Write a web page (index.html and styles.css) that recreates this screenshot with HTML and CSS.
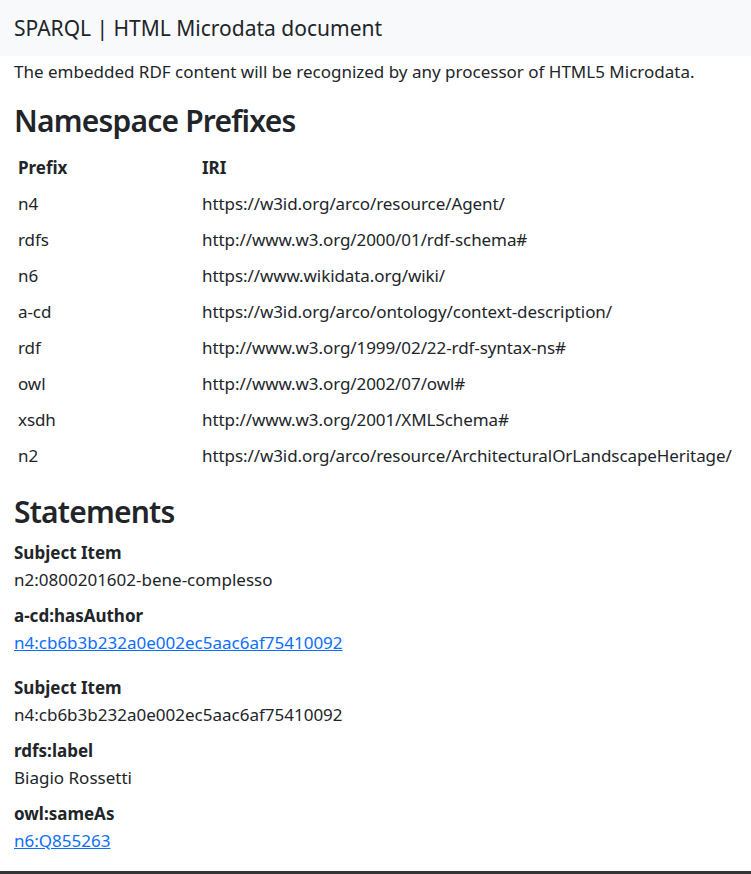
FILE: index.html
```html
<!DOCTYPE html>
<html lang="en">
<head>
<meta charset="utf-8">
<title>SPARQL | HTML Microdata document</title>
<link rel="stylesheet" href="styles.css">
</head>
<body>
<nav class="navbar"><span class="brand">SPARQL | HTML Microdata document</span></nav>
<main class="container">
  <p class="lead-text">The embedded RDF content will be recognized by any processor of HTML5 Microdata.</p>
  <h2 class="section-title">Namespace Prefixes</h2>
  <table class="prefix-table">
    <thead><tr><th class="col-prefix">Prefix</th><th>IRI</th></tr></thead>
    <tbody>
      <tr><td>n4</td><td>https://w3id.org/arco/resource/Agent/</td></tr>
      <tr><td>rdfs</td><td>http://www.w3.org/2000/01/rdf-schema#</td></tr>
      <tr><td>n6</td><td>https://www.wikidata.org/wiki/</td></tr>
      <tr><td>a-cd</td><td>https://w3id.org/arco/ontology/context-description/</td></tr>
      <tr><td>rdf</td><td>http://www.w3.org/1999/02/22-rdf-syntax-ns#</td></tr>
      <tr><td>owl</td><td>http://www.w3.org/2002/07/owl#</td></tr>
      <tr><td>xsdh</td><td>http://www.w3.org/2001/XMLSchema#</td></tr>
      <tr><td>n2</td><td>https://w3id.org/arco/resource/ArchitecturalOrLandscapeHeritage/</td></tr>
    </tbody>
  </table>
  <h2 class="section-title">Statements</h2>
  <div class="statements">
    <dl class="item">
      <dt>Subject Item</dt>
      <dd>n2:0800201602-bene-complesso</dd>
      <dt>a-cd:hasAuthor</dt>
      <dd><a href="#">n4:cb6b3b232a0e002ec5aac6af75410092</a></dd>
    </dl>
    <dl class="item">
      <dt>Subject Item</dt>
      <dd>n4:cb6b3b232a0e002ec5aac6af75410092</dd>
      <dt>rdfs:label</dt>
      <dd>Biagio Rossetti</dd>
      <dt>owl:sameAs</dt>
      <dd><a href="#">n6:Q855263</a></dd>
    </dl>
  </div>
</main>
<footer class="footer"></footer>
</body>
</html>
```
FILE: styles.css
```css
html, body {
  margin: 0;
  padding: 0;
}
body {
  font-family: "Noto Sans", "Open Sans", sans-serif;
  font-size: 17px;
  line-height: 24px;
  color: #212529;
  background: #fff;
}
.navbar {
  background: #f8f9fa;
  height: 56px;
  display: flex;
  align-items: center;
  padding: 0 14px;
}
.brand {
  font-size: 21px;
  line-height: 30px;
  color: #212529;
}
.container {
  padding: 4px 14px 0;
}
.lead-text {
  margin: 0 0 18px;
}
.section-title {
  font-size: 30px;
  font-weight: 600;
  letter-spacing: -0.8px;
  line-height: 38px;
  margin: 0 0 10px;
}
.prefix-table {
  width: 100%;
  border-collapse: collapse;
  margin-bottom: 19px;
}
.prefix-table th,
.prefix-table td {
  text-align: left;
  padding: 6px 4px;
  vertical-align: top;
}
.prefix-table td {
  letter-spacing: -0.08px;
}
.prefix-table th {
  font-weight: 700;
}
.col-prefix {
  width: 176px;
}
.item {
  margin: 0 0 21px;
}
.item:last-child {
  margin-bottom: 0;
}
.item dt {
  font-weight: 700;
}
.item dd {
  margin: 3px 0 12px;
}
.item a {
  color: #0d6efd;
  text-decoration: underline;
}
.footer {
  height: 6px;
  margin-top: 18px;
  background: #343434;
}
```
